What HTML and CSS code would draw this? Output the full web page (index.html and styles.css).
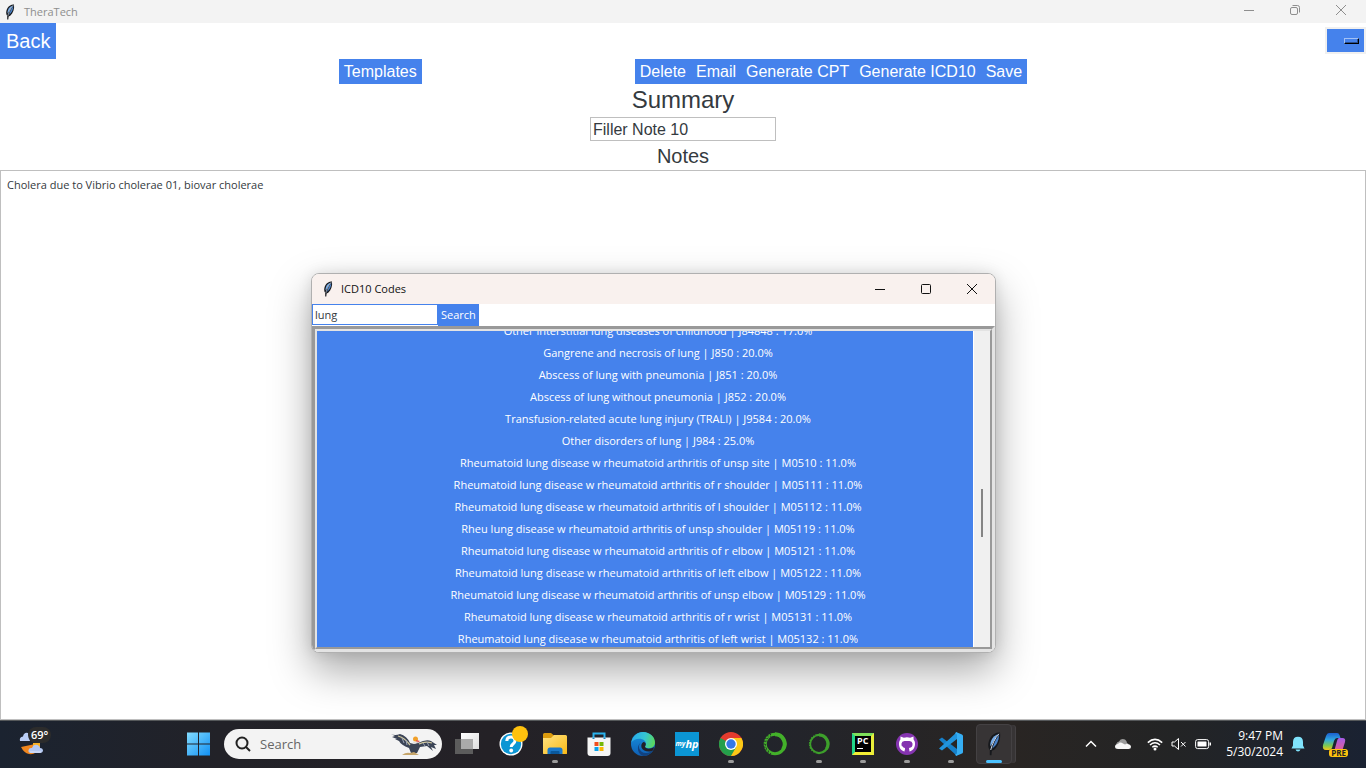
FILE: index.html
```html
<!DOCTYPE html>
<html lang="en">
<head>
<meta charset="utf-8">
<title>TheraTech</title>
<link rel="stylesheet" href="styles.css">
</head>
<body>
<svg class="defs" aria-hidden="true">
  <defs>
    <symbol id="feather" viewBox="0 0 16 16">
      <path d="M5.200 15.500 5.200 12C3.600 10 4 6.500 5.500 4 7 1.500 9.500 .2 12 .4 12.600 4.600 11.200 9 8.200 11.800L6.600 12.500 6.300 15.500Z" fill="#16181c"/>
      <path d="M5.600 9.500C5.200 7.500 6.400 4.500 8 3L10.600 1.400 7.400 6.800Z" fill="#78aeea"/>
      <path d="M11.300 1.800 8.800 6 6.800 11C9.600 9 11.300 6 11.300 1.800Z" fill="#4a82c8"/>
      <path d="M11.300 1.200C8.500 4.400 6.800 8 5.800 12" fill="none" stroke="#dce8f7" stroke-width=".6"/>
    </symbol>
  </defs>
</svg>

<header class="titlebar">
  <svg class="feather"><use href="#feather"/></svg>
  <span class="titlebar-name">TheraTech</span>
  <div class="caption">
    <button class="caption-btn" aria-label="Minimize"><svg viewBox="0 0 12 12"><path d="M1 6.500H11"/></svg></button>
    <button class="caption-btn" aria-label="Restore"><svg viewBox="0 0 12 12"><rect x="1.500" y="3.500" width="7" height="7" rx="1.500"/><path d="M3.500 1.500H8.500Q10.500 1.500 10.500 3.500V8.500"/></svg></button>
    <button class="caption-btn" aria-label="Close"><svg viewBox="0 0 12 12"><path d="M1 1 11 11M11 1 1 11"/></svg></button>
  </div>
</header>

<main class="app">
  <div class="nav">
    <button class="btn btn-back">Back</button>
    <button class="menu-btn" aria-label="Menu"><span class="menu-mark"></span></button>
  </div>
  <div class="toolbar">
    <button class="btn">Templates</button>
    <div class="actions">
      <button class="btn">Delete</button><button class="btn">Email</button><button class="btn">Generate CPT</button><button class="btn">Generate ICD10</button><button class="btn">Save</button>
    </div>
  </div>
  <label class="heading" for="summary">Summary</label>
  <input class="summary" id="summary" type="text" value="Filler Note 10">
  <label class="subheading" for="notes">Notes</label>
  <textarea class="notes" id="notes" spellcheck="false">Cholera due to Vibrio cholerae 01, biovar cholerae</textarea>
</main>

<section class="dialog" role="dialog" aria-labelledby="dialog-title">
  <div class="dialog-bar">
    <svg class="feather"><use href="#feather"/></svg>
    <span id="dialog-title">ICD10 Codes</span>
    <div class="caption">
      <button class="caption-btn" aria-label="Minimize"><svg viewBox="0 0 12 12"><path d="M1 6.500H11"/></svg></button>
      <button class="caption-btn" aria-label="Maximize"><svg viewBox="0 0 12 12"><rect x="1.500" y="1.500" width="9" height="9" rx="1"/></svg></button>
      <button class="caption-btn" aria-label="Close"><svg viewBox="0 0 12 12"><path d="M1 1 11 11M11 1 1 11"/></svg></button>
    </div>
  </div>
  <form class="search">
    <input class="search-box" type="text" value="lung" aria-label="Search ICD10 codes">
    <button class="search-btn" type="button">Search</button>
  </form>
  <div class="frame">
    <div class="frame-inner">
      <div class="results">
        <div class="results-list">
          <button class="code">Other interstitial lung diseases of childhood | J84848 : 17.0%</button>
          <button class="code">Gangrene and necrosis of lung | J850 : 20.0%</button>
          <button class="code">Abscess of lung with pneumonia | J851 : 20.0%</button>
          <button class="code">Abscess of lung without pneumonia | J852 : 20.0%</button>
          <button class="code">Transfusion-related acute lung injury (TRALI) | J9584 : 20.0%</button>
          <button class="code">Other disorders of lung | J984 : 25.0%</button>
          <button class="code">Rheumatoid lung disease w rheumatoid arthritis of unsp site | M0510 : 11.0%</button>
          <button class="code">Rheumatoid lung disease w rheumatoid arthritis of r shoulder | M05111 : 11.0%</button>
          <button class="code">Rheumatoid lung disease w rheumatoid arthritis of l shoulder | M05112 : 11.0%</button>
          <button class="code">Rheu lung disease w rheumatoid arthritis of unsp shoulder | M05119 : 11.0%</button>
          <button class="code">Rheumatoid lung disease w rheumatoid arthritis of r elbow | M05121 : 11.0%</button>
          <button class="code">Rheumatoid lung disease w rheumatoid arthritis of left elbow | M05122 : 11.0%</button>
          <button class="code">Rheumatoid lung disease w rheumatoid arthritis of unsp elbow | M05129 : 11.0%</button>
          <button class="code">Rheumatoid lung disease w rheumatoid arthritis of r wrist | M05131 : 11.0%</button>
          <button class="code">Rheumatoid lung disease w rheumatoid arthritis of left wrist | M05132 : 11.0%</button>
        </div>
      </div>
      <div class="scrollbar"><div class="thumb"></div></div>
    </div>
  </div>
</section>

<footer class="taskbar">
  <button class="weather" aria-label="Weather">
    <svg viewBox="0 0 32 32">
      <path d="M1 13Q0 9 4 8.500 5 4 9 5L11 13Z" fill="#b9cdf5"/>
      <path d="M2 19 21 15V20Q17 27 10 26 5 25 2 19Z" fill="#f0861e"/>
      <path d="M14 15H21V20H14Z" fill="#fbb224"/>
      <path d="M12 25Q9 25 9.500 22 10 19.500 13 20 14.500 15.500 18.500 17 21 18 21 20 24 20 24 23 23.500 25 21 25Z" fill="#b5c9f3"/>
      <path d="M11 24H22" stroke="#dce6fb" stroke-width="1"/>
    </svg>
    <span class="temp">69°</span>
  </button>

  <nav class="apps">
    <button class="task" aria-label="Start"><svg viewBox="0 0 24 24">
      <defs><linearGradient id="win" x1="0" y1="0" x2="1" y2="1"><stop offset="0" stop-color="#83dcff"/><stop offset="1" stop-color="#1190f3"/></linearGradient></defs>
      <path d="M1 .5H12V11.500H1ZM13 .5H24V11.500H13ZM1 12.500H12V23.500H1ZM13 12.500H24V23.500H13Z" fill="url(#win)"/></svg></button>
    <label class="task-search">
      <svg class="lens" viewBox="0 0 16 16"><circle cx="7" cy="7" r="5.500"/><path d="M11 11 15 15"/></svg>
      <input type="text" placeholder="Search">
      <svg class="bird" viewBox="0 0 48 24">
        <path d="M1 2Q5 4 10 2 17 4 20 11L24 12 28 11Q36 7 41 9L47 13 44 13 46 17 41 15 43 19 37 14 30 15 27 21H21L19 16Q11 13 9 9L11 10 5 7 7 7 2 5 5 4Z" fill="#3b4456"/>
        <path d="M8 4Q15 6 20 13M29 12Q35 9 42 11" fill="none" stroke="#cfc79f" stroke-width="1.300"/>
        <path d="M12 6 14 11M16 8 17 13M33 11 35 14M37 10 39 14" stroke="#9aa4b6" stroke-width="1"/>
        <circle cx="25.500" cy="7" r="2.500" fill="#f0a02a"/><path d="M26 8 30 9 27 11Z" fill="#e34d4d"/><path d="M23 10Q25 12 28 10" stroke="#ddd" fill="none"/>
        <path d="M12 23Q16 20 20 21L24 20 29 23Z" fill="#c6a56a"/>
      </svg>
    </label>
    <button class="task task-edge" aria-label="Task view"><svg viewBox="0 0 24 24">
      <defs><linearGradient id="tv" x1="0" y1="0" x2="1" y2="1"><stop offset="0" stop-color="#fff"/><stop offset="1" stop-color="#ddd"/></linearGradient></defs>
      <path d="M6 1H24V17H6Z" fill="url(#tv)"/><path d="M0 7H18V22H0Z" fill="#646464" fill-opacity=".88"/><path d="M6 7H18V17H6Z" fill="#aaa"/></svg></button>
    <button class="task" aria-label="Help"><svg viewBox="0 0 24 24">
      <circle cx="12" cy="12" r="11.500" fill="#fff"/><circle cx="12" cy="12" r="10.200" fill="#0c96d4"/>
      <path d="M7.800 9Q8 5 12 5 16 5 16 8.500 16 10.500 14 12 12.200 13.300 12.200 15" fill="none" stroke="#fff" stroke-width="3"/><circle cx="12.200" cy="18.500" r="1.900" fill="#fff"/></svg><span class="alert-dot"></span></button>
    <button class="task open" aria-label="File Explorer"><svg viewBox="0 0 24 24">
      <defs><linearGradient id="fold" x1="0" y1="0" x2="1" y2="1"><stop offset="0" stop-color="#ffe383"/><stop offset="1" stop-color="#f9b916"/></linearGradient></defs>
      <path d="M0 2.500Q0 1 1.500 1H8L11 3.500H22.500Q24 3.500 24 5V22H0Z" fill="#dc9b0d"/><path d="M0 6H8L11 3H22.500Q24 3 24 4.500V20.500Q24 22 22.500 22H1.500Q0 22 0 20.500Z" fill="url(#fold)"/>
      <path d="M4.500 22V18Q4.500 15.500 7 15.500H17Q19.500 15.500 19.500 18V22Z" fill="#1a79cb"/><path d="M7.500 22V20Q7.500 19 8.500 19H15.500Q16.500 19 16.500 20V22Z" fill="#0a589c"/></svg></button>
    <button class="task" aria-label="Microsoft Store"><svg viewBox="0 0 24 24">
      <path d="M6.500 7V1.500H17.500V7" fill="none" stroke="#2bb3ed" stroke-width="2"/><path d="M.5 5.500H23.500V21Q23.500 24 20.500 24H3.500Q.5 24 .5 21Z" fill="#f5f5f5"/><path d="M6.500 5.500V7M17.500 5.500V7" stroke="#1685c0" stroke-width="2"/>
      <path d="M7.500 10H11.500V14H7.500Z" fill="#f04d1c"/><path d="M12.500 10H16.500V14H12.500Z" fill="#75b707"/><path d="M7.500 15H11.500V19H7.500Z" fill="#08a0ea"/><path d="M12.500 15H16.500V19H12.500Z" fill="#fab604"/></svg></button>
    <button class="task" aria-label="Edge"><svg viewBox="0 0 24 24">
      <defs><linearGradient id="edge1" x1="0" y1=".3" x2="1" y2=".5"><stop offset="0" stop-color="#27a9ec"/><stop offset=".55" stop-color="#35c6d2"/><stop offset="1" stop-color="#5bd85b"/></linearGradient><linearGradient id="edge2" x1="0" y1="0" x2="0" y2="1"><stop offset="0" stop-color="#1891dd"/><stop offset="1" stop-color="#0f5fb5"/></linearGradient></defs>
      <circle cx="12" cy="12" r="12" fill="url(#edge2)"/>
      <path d="M.3 10.500C1.500 4 6.500 0 12 0 19 0 24 5.200 24 10.500 24 14 21.400 16.200 18.200 16.200 15.500 16.200 14 15.300 14 14.500 14 13.800 15 13.500 15 11.700 15 9 12 6.800 8.300 6.800 4.800 6.800 1.800 8.400.3 10.500Z" fill="url(#edge1)"/>
      <path d="M10 10.500C6 13 8 21 15 21 18 21 21 19.500 22.500 18 20 22 16 24 12.500 24 7 23 4.500 14 10 10.500Z" fill="#12427f"/><path d="M14 14.500C14 17 19.500 17.500 23 15L22.500 18C19 21 12 19.500 10.500 15.500 10 13 10.500 11 12.500 10 15.500 10.500 15 13 14 14.500Z" fill="#222026"/></svg></button>
    <button class="task" aria-label="myHP"><span class="myhp"><small>my</small>hp</span></button>
    <button class="task open" aria-label="Chrome"><svg viewBox="0 0 24 24">
      <circle cx="12" cy="12" r="12" fill="#e33b2e"/><path d="M12 12 1.600 6A12 12 0 0 0 12 24L18 15Z" fill="#249f4b"/><path d="M12 6H22.400A12 12 0 0 1 12 24L17.200 15Z" fill="#fcc916"/>
      <circle cx="12" cy="12" r="6" fill="#fff"/><circle cx="12" cy="12" r="4.700" fill="#3478e5"/></svg></button>
    <button class="task" aria-label="Anaconda"><svg viewBox="0 0 24 24"><circle cx="12" cy="12" r="9.800" fill="none" stroke="#43b02a" stroke-width="3"/><path d="M12 2.200A9.800 9.800 0 0 1 20 17.500" fill="none" stroke="#43b02a" stroke-width="4"/><path d="M8 22A10.800 10.800 0 0 1 8 2" fill="none" stroke="#222329" stroke-width="1.300" stroke-dasharray="1 2"/><path d="M6 19.500A9 9 0 0 1 8 4" fill="none" stroke="#222329" stroke-width="1" stroke-dasharray="1.500 2"/></svg></button>
    <button class="task open" aria-label="Anaconda Navigator"><svg viewBox="-1 -1 26 26"><circle cx="12" cy="12" r="9.800" fill="none" stroke="#3d9f2b" stroke-width="2.500"/><path d="M12 2.200A9.800 9.800 0 0 1 20 17.500" fill="none" stroke="#3d9f2b" stroke-width="3.500"/><path d="M8 22A10.800 10.800 0 0 1 8 2" fill="none" stroke="#222329" stroke-width="1.300" stroke-dasharray="1 2"/></svg></button>
    <button class="task open" aria-label="PyCharm"><span class="pycharm">PC</span></button>
    <button class="task open" aria-label="GitHub Desktop"><svg viewBox="0 0 24 24">
      <circle cx="12" cy="12" r="11" fill="#8534b0"/><path d="M9.500 19.600C5.500 18.500 3.800 15 4 11.500 4 9.700 4.700 8.500 5.400 7.500L5.500 4.400 8.800 5.700Q12 4.800 15.200 5.700L18.500 4.400 18.600 7.500C19.500 8.700 20 9.800 20 11.500 20.200 15 18.500 18.500 14.500 19.600L14 16Q18 15.500 17.500 11.500 17.200 9 14.500 9H9.500Q6.800 9 6.500 11.500 6 15.500 10 16Z" fill="#fff"/><path d="M7 14.500Q8 17.500 10 17.200" fill="none" stroke="#fff" stroke-width="1.200"/></svg></button>
    <button class="task open" aria-label="Visual Studio Code"><svg viewBox="0 0 24 24">
      <path d="M0 7.500 3 5.500 18 17V24Z" fill="#1680ca"/><path d="M0 16.500 3 18.500 18 7V0Z" fill="#2194dd"/><path d="M17 0 23 2.500Q24 3 24 4V20Q24 21 23 21.500L17 24 16 22Q18 23 18 20V4Q18 1 16 2Z" fill="#36aef3"/></svg></button>
    <button class="task active" aria-label="TheraTech"><svg viewBox="0 0 16 16"><use href="#feather"/></svg></button>
  </nav>

  <div class="tray">
    <button class="tray-btn" aria-label="Hidden icons"><svg viewBox="0 0 16 16"><path class="line" d="M3 10.500 8 5.500 13 10.500"/></svg></button>
    <button class="tray-btn" aria-label="OneDrive"><svg viewBox="0 0 16 16"><path d="M2 10Q0 7 4 5.500 6 2 10 3.500 12 5 12 7L15 9V12H3Z" fill="#9a9a9a"/><path d="M3 13Q0 13 0 10.500 .2 8 3 8 5 5.500 8 7.500L10 8.500Q12 6.800 13.500 8.500 16 8.500 16 11 16 13 13.500 13Z" fill="#f6f6f6"/></svg></button>
    <div class="quick">
      <svg viewBox="0 0 16 16"><path class="line" d="M.8 6.600Q8 .2 15.200 6.600M3 9Q8 4.600 13 9M5.300 11.300Q8 9 10.700 11.300"/><circle cx="8" cy="13" r="1.500" fill="#fff"/></svg>
      <svg viewBox="0 0 16 16"><path class="line thin" d="M1 6H3.500L7.500 2.500V13.500L3.500 10H1ZM10 6 14.500 10.500M14.500 6 10 10.500"/></svg>
      <svg viewBox="0 0 16 16"><rect class="line thin" x=".6" y="3.600" width="13" height="9" rx="2"/><rect x="2.500" y="5.500" width="9" height="5" rx=".5" fill="#fff"/><path d="M14.500 6.500H16V9.500H14.500Z" fill="#fff"/></svg>
    </div>
    <div class="clock"><time>9:47 PM</time><time>5/30/2024</time></div>
    <button class="bell" aria-label="Notifications"><svg viewBox="0 0 16 16"><path d="M1.500 12.500 3 9.500V6Q3 .8 8 .8T13 6V9.500L14.500 12.500ZM5.500 13.500H10.500Q9.800 15.500 8 15.500T5.500 13.500Z" fill="#7fe3fc"/></svg></button>
    <button class="copilot" aria-label="Copilot">
      <svg viewBox="0 0 24 24">
        <defs><linearGradient id="cp1" x1="0" y1="0" x2="0" y2="1"><stop offset="0" stop-color="#1b5fd0"/><stop offset=".4" stop-color="#2fa8e0"/><stop offset=".75" stop-color="#7fc94e"/><stop offset="1" stop-color="#f5c518"/></linearGradient><linearGradient id="cp2" x1="0" y1="0" x2="0" y2="1"><stop offset="0" stop-color="#a45be8"/><stop offset="1" stop-color="#f3607b"/></linearGradient></defs>
        <path d="M7 1H15Q17 1 17.500 3L18.500 6H15Q13 6 12 9L10 16Q9.300 18 7 18H4Q0 18 1 13L4 4Q5 1 7 1Z" fill="url(#cp1)"/><path d="M17 6H20.500Q24 6 23 10L20.500 18Q19.500 22 16 22H9L12.500 18 15 9Q15.700 6 17 6Z" fill="url(#cp2)"/></svg>
      <span class="pre">PRE</span>
    </button>
  </div>
</footer>
</body>
</html>
```
FILE: styles.css
```css
* { box-sizing: border-box; }

body {
  margin: 0;
  min-height: 100vh;
  display: flex;
  flex-direction: column;
  background: #fff;
  color: #343a40;
  font: 11px/16px "Open Sans", "Noto Sans", sans-serif;
}

button, input, textarea {
  margin: 0;
  padding: 0;
  border: 0;
  border-radius: 0;
  background: none;
  color: inherit;
  font: inherit;
  outline: 0;
}

svg { display: block; flex: none; }
.defs { position: absolute; width: 0; height: 0; }
.feather { width: 16px; height: 16px; }

/* Main window */
.titlebar {
  display: flex;
  align-items: center;
  height: 23px;
  padding-left: 2px;
  background: #f3f3f3;
  color: #8e8e8e;
}
.titlebar-name { margin-left: 6px; }
.caption { display: flex; margin-left: auto; height: 100%; }
.caption-btn {
  display: flex;
  align-items: center;
  justify-content: center;
  width: 46px;
  height: 100%;
}
.caption-btn svg { width: 12px; height: 12px; fill: none; stroke: currentColor; stroke-width: 1; }
.titlebar .caption { padding-right: 2px; padding-bottom: 3px; }

.app {
  flex: 1;
  display: flex;
  flex-direction: column;
  align-items: center;
  font-family: "Liberation Sans", Arial, sans-serif;
}
.nav {
  display: flex;
  align-items: flex-start;
  justify-content: space-between;
  width: 100%;
}
.btn {
  height: 25px;
  padding: 0 5px;
  background: #4582ec;
  color: #fff;
  font-size: 16px;
  line-height: 25px;
}
.btn-back { height: 36px; padding: 0 6px; font-size: 20px; line-height: 36px; }
.menu-btn {
  display: flex;
  align-items: center;
  justify-content: flex-end;
  width: 41px;
  height: 27px;
  margin-top: 4px;
  padding-right: 5px;
  border: 2px solid #f0f0f0;
  background: #4582ec;
}
.menu-mark {
  width: 15px;
  height: 6px;
  border: 1px solid;
  border-color: #a2c1f6 #000 #000 #a2c1f6;
  box-shadow: inset -1px -1px 0 #2b4f8f;
}
.toolbar { display: flex; justify-content: center; gap: 213px; }
.actions { display: flex; }
.heading { padding-bottom: 2px; font-size: 24px; line-height: 31px; }
.summary {
  width: 186px;
  height: 24px;
  padding: 2px 2px 0;
  border: 1px solid #bfbfbf;
  font-size: 16px;
}
.subheading { padding-top: 2px; font-size: 20px; line-height: 27px; }
.notes {
  flex: 1;
  width: 100%;
  padding: 6px;
  border: 1px solid #bfbfbf;
  resize: none;
  font: 11px/16px "Open Sans", "Noto Sans", sans-serif;
}

/* Floating code picker */
.dialog {
  position: absolute;
  left: 311px;
  top: 273px;
  display: flex;
  flex-direction: column;
  width: 685px;
  height: 380px;
  overflow: hidden;
  border: 1px solid #b0b0b0;
  border-radius: 8px;
  background: #fff;
  box-shadow: 0 18px 40px rgba(0, 0, 0, .34), 0 0 14px rgba(0, 0, 0, .1);
}
.dialog-bar {
  display: flex;
  align-items: center;
  flex: none;
  height: 30px;
  padding-left: 8px;
  background: #f9f1ee;
  color: #111;
}
.dialog-bar #dialog-title { margin-left: 5px; }
.search { display: flex; flex: none; height: 22px; }
.search-box {
  width: 126px;
  height: 21px;
  padding: 0 2px;
  border: 1px solid #4582ec;
}
.search-btn { padding: 0 3px; background: #4582ec; color: #fff; }
.frame {
  display: flex;
  flex: 1;
  min-height: 0;
  border: 3px solid;
  border-color: #999 #e3e3e3 #e3e3e3 #999;
}
.frame-inner {
  display: flex;
  flex: 1;
  min-width: 0;
  border: 2px solid;
  border-color: #e3e3e3 #999 #999 #e3e3e3;
}
.results { flex: 1; overflow: hidden; background: #4582ec; }
.results-list { display: flex; flex-direction: column; margin-top: -11px; padding-left: 26px; }
.code { height: 22px; flex: none; color: #fff; text-align: center; white-space: nowrap; }
.scrollbar {
  display: flex;
  justify-content: center;
  width: 17px;
  padding-top: 158px;
  border-left: 1px solid #fff;
  background: #f0f0f0;
}
.thumb { width: 2px; height: 48px; background: #858585; }

/* Taskbar */
.taskbar {
  display: grid;
  grid-template-columns: 176px auto 1fr;
  align-items: center;
  height: 48px;
  padding-bottom: 1px;
  border-top: 1px solid #55585a;
  background: linear-gradient(90deg, #1b2330, #222228 16%, #242126 36%, #22242b 56%, #292523 74%, #232425 86%, #1a2232);
  color: #fff;
}
.weather { position: relative; width: 32px; height: 32px; margin-left: 19px; }
.weather svg { width: 32px; height: 32px; }
.temp {
  position: absolute;
  top: -1px;
  left: 9px;
  padding: 0 3px;
  border-radius: 8px;
  background: #2c2c2c;
  font-size: 11px;
  font-weight: 600;
}
.apps { display: flex; align-items: center; }
.task {
  position: relative;
  display: flex;
  align-items: center;
  justify-content: center;
  width: 44px;
  height: 44px;
}
.task svg { width: 24px; height: 24px; }
.task-edge { margin-left: 3px; }
.open::after, .active::after {
  content: "";
  position: absolute;
  bottom: 3px;
  width: 6px;
  height: 3px;
  border-radius: 2px;
  background: #9b9b9b;
}
.active {
  width: 36px;
  height: 40px;
  margin-left: 3px;
  border: 1px solid #444143;
  border-radius: 4px;
  background: #373435;
  box-shadow: 4px 0 0 -1px #373435, 5px 0 0 -1px #444143;
}
.active::after { bottom: 0; width: 16px; background: #4cc2ff; }
.alert-dot {
  position: absolute;
  top: 4px;
  right: 5px;
  width: 16px;
  height: 16px;
  border-radius: 50%;
  background: #ffc20e;
}
.task-search {
  display: flex;
  align-items: center;
  width: 218px;
  height: 30px;
  margin-left: 4px;
  padding: 0 4px 0 11px;
  border-radius: 15px;
  background: #f3f3f3;
}
.lens { width: 16px; height: 16px; fill: none; stroke: #222; stroke-width: 2; }
.task-search input {
  flex: 1;
  min-width: 0;
  margin-left: 9px;
  color: #222;
  font-size: 13px;
}
.task-search input::placeholder { color: #666; opacity: 1; }
.bird { width: 48px; height: 24px; }
.myhp {
  display: flex;
  align-items: center;
  justify-content: center;
  width: 24px;
  height: 24px;
  background: #0b96d5;
  font-size: 11px;
  font-style: italic;
  font-weight: 700;
}
.myhp small { font-size: 7px; }
.pycharm {
  width: 22px;
  height: 22px;
  padding-left: 2px;
  border: 3px solid;
  border-color: #7fe05a #e9ee3a #f3ee35 #21d789;
  background:
    linear-gradient(#fff, #fff) 2px 12px / 6px 1px no-repeat,
    #000;
  font-size: 9px;
  font-weight: 700;
  line-height: 10px;
  text-align: left;
}
.tray { display: flex; align-items: center; justify-content: flex-end; padding-right: 16px; }
.tray-btn { display: flex; align-items: center; justify-content: center; width: 32px; height: 32px; }
.tray svg { width: 16px; height: 16px; }
.line { fill: none; stroke: #fff; stroke-width: 1.5; }
.thin { stroke-width: 1; }
.quick { display: flex; gap: 8px; margin-left: 8px; }
.clock {
  display: flex;
  flex-direction: column;
  min-width: 72px;
  margin-right: 7px;
  font-size: 12px;
  text-align: right;
}
.bell { display: flex; }
.copilot { position: relative; display: flex; justify-content: center; width: 32px; margin-left: 12px; }
.tray .copilot svg { width: 24px; height: 24px; }
.pre {
  position: absolute;
  right: 2px;
  bottom: -1px;
  padding: 0 2px;
  border-radius: 3px;
  background: #ffc20e;
  color: #222;
  font-size: 8px;
  font-weight: 700;
  line-height: 8px;
}
```
